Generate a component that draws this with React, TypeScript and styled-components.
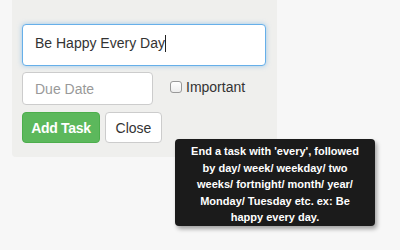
import React from 'react'
import styled, { createGlobalStyle } from 'styled-components'

const Global = createGlobalStyle`
  html, body {
    margin: 0;
    padding: 0;
    background: #f7f7f7;
    font-family: "Liberation Sans", Arial, sans-serif;
  }
`

const Page = styled.div`
  position: relative;
  width: 400px;
  height: 250px;
  overflow: hidden;
  background: #f7f7f7;
`

const Panel = styled.div`
  margin-left: 12px;
  width: 265px;
  box-sizing: border-box;
  padding: 24px 11px 14px 10px;
  background: #efefed;
  border-radius: 0 0 4px 4px;
  display: flex;
  flex-direction: column;
  gap: 6px;
`

const TaskField = styled.div`
  box-sizing: border-box;
  height: 42px;
  padding: 9px 12px;
  background: #fff;
  border: 1px solid #66afe9;
  border-radius: 4px;
  box-shadow: 0 0 5px rgba(102, 175, 233, 0.6);
  font-size: 14px;
  color: #333;
  line-height: 18px;
`

const Caret = styled.span`
  display: inline-block;
  width: 1px;
  height: 17px;
  background: #222;
  vertical-align: -4px;
`

const Row = styled.div<{ $gap?: number; $top?: number }>`
  display: flex;
  align-items: flex-start;
  gap: ${p => p.$gap ?? 0}px;
  margin-top: ${p => p.$top ?? 0}px;
`

const DateField = styled.div`
  box-sizing: border-box;
  width: 131px;
  height: 33px;
  padding: 0 12px;
  display: flex;
  align-items: center;
  background: #fff;
  border: 1px solid #ccc;
  border-radius: 4px;
  font-size: 14px;
  color: #999;
`

const CheckLabel = styled.label`
  display: flex;
  align-items: center;
  gap: 4px;
  margin-top: 7px;
  font-size: 14px;
  color: #333;
`

const Box = styled.span`
  box-sizing: border-box;
  width: 12px;
  height: 12px;
  border: 1px solid #999;
  border-radius: 3px;
  background: linear-gradient(#fff, #ededed);
`

const Button = styled.div<{ $primary?: boolean; $width: number }>`
  box-sizing: border-box;
  width: ${p => p.$width}px;
  height: 31px;
  display: flex;
  align-items: center;
  justify-content: center;
  border-radius: 4px;
  font-size: 14px;
  letter-spacing: ${p => (p.$primary ? '-0.3px' : '0')};
  font-weight: ${p => (p.$primary ? 700 : 400)};
  color: ${p => (p.$primary ? '#fff' : '#333')};
  background: ${p => (p.$primary ? '#5cb85c' : '#fff')};
  border: 1px solid ${p => (p.$primary ? '#4cae4c' : '#ccc')};
`

const Tooltip = styled.div`
  position: absolute;
  left: 175px;
  top: 139px;
  width: 200px;
  height: 87px;
  box-sizing: border-box;
  padding: 4px 6px;
  background: #1b1b1b;
  border-radius: 4px;
  box-shadow: 2px 3px 4px rgba(0, 0, 0, 0.35);
  color: #fff;
  font-size: 11px;
  font-weight: 700;
  line-height: 16.5px;
  text-align: center;
  white-space: nowrap;
`

const tipLines = [
  "End a task with 'every', followed",
  'by day/ week/ weekday/ two',
  'weeks/ fortnight/ month/ year/',
  'Monday/ Tuesday etc. ex: Be',
  'happy every day.',
]

export default function App() {
  return (
    <Page>
      <Global />
      <Panel>
        <TaskField>
          Be Happy Every Day<Caret />
        </TaskField>
        <Row $gap={17}>
          <DateField>Due Date</DateField>
          <CheckLabel>
            <Box />
            Important
          </CheckLabel>
        </Row>
        <Row $gap={5} $top={1}>
          <Button $primary $width={78}>Add Task</Button>
          <Button $width={57}>Close</Button>
        </Row>
      </Panel>
      <Tooltip>
        {tipLines.map((line, i) => (
          <React.Fragment key={i}>
            {line}
            {i < tipLines.length - 1 && <br />}
          </React.Fragment>
        ))}
      </Tooltip>
    </Page>
  )
}
